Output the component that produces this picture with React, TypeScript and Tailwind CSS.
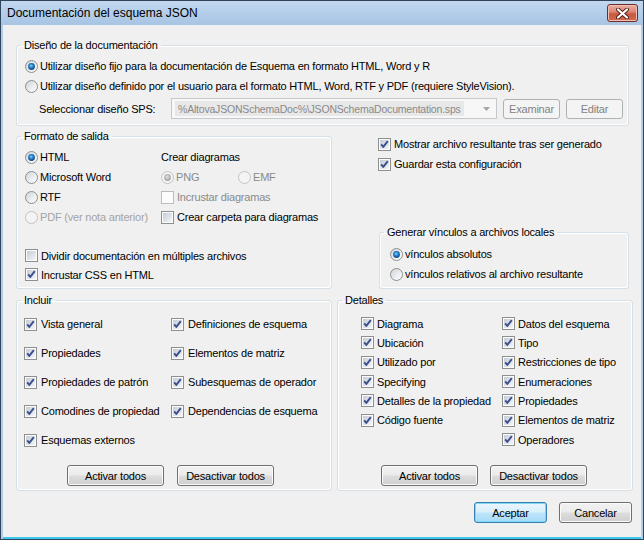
import React from "react";

const leftInclude = ["Vista general", "Propiedades", "Propiedades de patrón", "Comodines de propiedad", "Esquemas externos"];
const rightInclude = ["Definiciones de esquema", "Elementos de matriz", "Subesquemas de operador", "Dependencias de esquema"];

const leftDetails = ["Diagrama", "Ubicación", "Utilizado por", "Specifying", "Detalles de la propiedad", "Código fuente"];
const rightDetails = [
  "Datos del esquema",
  "Tipo",
  "Restricciones de tipo",
  "Enumeraciones",
  "Propiedades",
  "Elementos de matriz",
  "Operadores",
];

function Defs() {
  return (
    <svg width="0" height="0" className="absolute">
      <defs>
        <linearGradient id="cbFill" x1="0" y1="0" x2="1" y2="1">
          <stop offset="0" stopColor="#c6ccd6" />
          <stop offset="1" stopColor="#f3f5f8" />
        </linearGradient>
        <linearGradient id="rbFill" x1="0" y1="0" x2="1" y2="1">
          <stop offset="0" stopColor="#cdd1d6" />
          <stop offset="0.6" stopColor="#eef0f2" />
          <stop offset="1" stopColor="#fbfbfb" />
        </linearGradient>
        <radialGradient id="rbDot" cx="0.45" cy="0.4" r="0.6">
          <stop offset="0" stopColor="#7fd9ff" />
          <stop offset="0.45" stopColor="#2a86d0" />
          <stop offset="1" stopColor="#123d77" />
        </radialGradient>
        <radialGradient id="rbDotGray" cx="0.45" cy="0.4" r="0.6">
          <stop offset="0" stopColor="#e2e2e2" />
          <stop offset="1" stopColor="#9d9d9d" />
        </radialGradient>
      </defs>
    </svg>
  );
}

function Check({ checked = false, disabled = false }: { checked?: boolean; disabled?: boolean }) {
  return (
    <svg width="13" height="13" viewBox="0 0 13 13" className="shrink-0">
      <rect x="0.5" y="0.5" width="12" height="12" fill="#fcfcfc" stroke={disabled ? "#bcbcbc" : "#8e8f8f"} />
      {!disabled && <rect x="2" y="2" width="9" height="9" fill="url(#cbFill)" />}
      {checked && (
        <path d="M3.2 6.4 L5.3 8.9 L9.8 3.2" stroke="#3a4f8c" strokeWidth="1.9" fill="none" strokeLinejoin="round" />
      )}
    </svg>
  );
}

function Radio({ checked = false, disabled = false }: { checked?: boolean; disabled?: boolean }) {
  return (
    <svg width="13" height="13" viewBox="0 0 13 13" className="shrink-0">
      <circle cx="6.5" cy="6.5" r="6" fill={disabled ? "#f4f4f4" : "url(#rbFill)"} stroke={disabled ? "#c2c2c2" : "#8e8f8f"} />
      {checked && <circle cx="6.5" cy="6.5" r="3.4" fill={disabled ? "url(#rbDotGray)" : "url(#rbDot)"} />}
    </svg>
  );
}

function Group({ label, className = "", children }: { label: string; className?: string; children?: React.ReactNode }) {
  return (
    <fieldset
      className={`border border-[#d5dfe5] rounded-[3px] shadow-[inset_1px_1px_0_#ffffff,inset_-1px_-1px_0_#ffffff] ${className}`}
    >
      <legend className="ml-[4px] px-[3px] leading-[14px]">{label}</legend>
      {children}
    </fieldset>
  );
}

function Btn({
  children,
  variant = "normal",
  className = "",
}: {
  children: React.ReactNode;
  variant?: "normal" | "def" | "disabled";
  className?: string;
}) {
  const styles = {
    normal:
      "border-[#707070] text-black bg-[linear-gradient(to_bottom,#f2f2f2_0%,#ebebeb_48%,#dddddd_52%,#cfcfcf_100%)] shadow-[inset_0_0_0_1px_#fbfbfb]",
    def: "border-[#3c7fb1] text-black bg-[linear-gradient(to_bottom,#eaf6fd_0%,#d9f0fc_48%,#bee6fd_52%,#a7d9f5_100%)] shadow-[inset_0_0_0_1px_#7fd8f8]",
    disabled: "border-[#adb2b5] text-[#838383] bg-[#f4f4f4]",
  };
  return (
    <button
      type="button"
      className={`flex items-center justify-center rounded-[3px] border leading-[14px] ${styles[variant]} ${className}`}
    >
      {children}
    </button>
  );
}

export default function App() {
  return (
    <div className="w-[644px] h-[540px] flex flex-col border border-[#30445c] bg-[#b3cce8] font-['Liberation_Sans',_Arial,_sans-serif] text-[11px] leading-[14px] tracking-[-0.2px] text-black">
      <Defs />
      {/* title bar */}
      <div className="h-[24px] shrink-0 flex items-center justify-between pl-[6px] pr-[5px] bg-[linear-gradient(to_bottom,#c2d8ef,#a7c4e3)]">
        <span className="text-[12px] tracking-normal">Documentación del esquema JSON</span>
        <div className="w-[31px] h-[18px] rounded-[3px] border border-[#6e2c26] bg-[linear-gradient(to_bottom,#eab0a2_0%,#d9846f_45%,#c9583f_55%,#cf6b4f_100%)] shadow-[inset_0_0_0_1px_#f2c0b4] flex items-center justify-center">
          <svg width="13" height="11" viewBox="0 0 13 11">
            <path d="M2 1.5 L11 9.5 M11 1.5 L2 9.5" stroke="#4d1d18" strokeWidth="4" strokeLinecap="round" />
            <path d="M2 1.5 L11 9.5 M11 1.5 L2 9.5" stroke="#ffffff" strokeWidth="2.2" strokeLinecap="round" />
          </svg>
        </div>
      </div>

      {/* body */}
      <div className="flex-1 mx-[2px] bg-[#f0f0f0] border-b-2 border-[#3cc6ec] pl-[13px] pt-[13px] flex flex-col">
        <Group label="Diseño de la documentación" className="w-[613px] h-[88px]">
          <div className="pl-[8px] pt-[4px] flex flex-col">
            <div className="h-[20px] flex items-center">
              <Radio checked />
              <span className="ml-[2px]">Utilizar diseño fijo para la documentación de Esquema en formato HTML, Word y R</span>
            </div>
            <div className="h-[20px] flex items-center">
              <Radio />
              <span className="ml-[2px]">
                Utilizar diseño definido por el usuario para el formato HTML, Word, RTF y PDF (requiere StyleVision).
              </span>
            </div>
            <div className="h-[21px] mt-[2px] flex items-center">
              <span className="ml-[14px] w-[132px]">Seleccionar diseño SPS:</span>
              <div className="w-[326px] h-[21px] border border-[#c5c8cc] bg-[#f7f7f7] flex items-center pl-[3px] pr-[4px]">
                <span className="h-[15px] flex items-center bg-[#e8e8e8] px-[3px] text-[#8a8a8a] text-[10.5px]">
                  %AltovaJSONSchemaDoc%\JSONSchemaDocumentation.sps
                </span>
                <svg width="7" height="4" viewBox="0 0 7 4" className="ml-auto mr-[2px]">
                  <path d="M0 0 H7 L3.5 4 Z" fill="#a5a5a5" />
                </svg>
              </div>
              <Btn variant="disabled" className="ml-[6px] w-[57px] h-[20px]">
                Examinar
              </Btn>
              <Btn variant="disabled" className="ml-[6px] w-[57px] h-[20px]">
                Editar
              </Btn>
            </div>
          </div>
        </Group>

        <div className="flex mt-[3px]">
          <Group label="Formato de salida" className="w-[316px] h-[160px]">
            <div className="flex pl-[8px] pt-[4px]">
              <div className="w-[136px] flex flex-col">
                <div className="h-[20px] flex items-center">
                  <Radio checked />
                  <span className="ml-[2px]">HTML</span>
                </div>
                <div className="h-[20px] flex items-center">
                  <Radio />
                  <span className="ml-[2px]">Microsoft Word</span>
                </div>
                <div className="h-[20px] flex items-center">
                  <Radio />
                  <span className="ml-[2px]">RTF</span>
                </div>
                <div className="h-[20px] flex items-center">
                  <Radio disabled />
                  <span className="ml-[2px] text-[#a3a3a3]">PDF (ver nota anterior)</span>
                </div>
              </div>
              <div className="flex flex-col">
                <div className="h-[20px] flex items-center">Crear diagramas</div>
                <div className="h-[20px] flex items-center">
                  <div className="w-[77px] flex items-center">
                    <Radio checked disabled />
                    <span className="ml-[2px] text-[#8a8a8a]">PNG</span>
                  </div>
                  <Radio disabled />
                  <span className="ml-[2px] text-[#8a8a8a]">EMF</span>
                </div>
                <div className="h-[20px] flex items-center">
                  <Check disabled />
                  <span className="ml-[3px] text-[#8a8a8a]">Incrustar diagramas</span>
                </div>
                <div className="h-[20px] flex items-center">
                  <Check />
                  <span className="ml-[3px]">Crear carpeta para diagramas</span>
                </div>
              </div>
            </div>
            <div className="pl-[8px] mt-[19px] flex flex-col">
              <div className="h-[19px] flex items-center">
                <Check />
                <span className="ml-[3px]">Dividir documentación en múltiples archivos</span>
              </div>
              <div className="h-[19px] flex items-center">
                <Check checked />
                <span className="ml-[3px]">Incrustar CSS en HTML</span>
              </div>
            </div>
          </Group>

          <div className="flex-1 flex flex-col">
            <div className="pl-[46px] pt-[5px] flex flex-col">
              <div className="h-[20px] flex items-center">
                <Check checked />
                <span className="ml-[3px]">Mostrar archivo resultante tras ser generado</span>
              </div>
              <div className="h-[20px] flex items-center">
                <Check checked />
                <span className="ml-[3px]">Guardar esta configuración</span>
              </div>
            </div>
            <Group label="Generar vínculos a archivos locales" className="ml-[47px] mt-[51px] w-[250px] h-[64px]">
              <div className="pl-[10px] pt-[5px] flex flex-col">
                <div className="h-[20px] flex items-center">
                  <Radio checked />
                  <span className="ml-[2px]">vínculos absolutos</span>
                </div>
                <div className="h-[20px] flex items-center">
                  <Radio />
                  <span className="ml-[2px]">vínculos relativos al archivo resultante</span>
                </div>
              </div>
            </Group>
          </div>
        </div>

        <div className="flex mt-[4px]">
          <Group label="Incluir" className="w-[316px] h-[198px]">
            <div className="flex pl-[7px] pt-[7px]">
              <div className="w-[147px] flex flex-col gap-[9px]">
                {leftInclude.map((t) => (
                  <div key={t} className="h-[20px] flex items-center">
                    <Check checked />
                    <span className="ml-[4px]">{t}</span>
                  </div>
                ))}
              </div>
              <div className="flex flex-col gap-[9px]">
                {rightInclude.map((t) => (
                  <div key={t} className="h-[20px] flex items-center">
                    <Check checked />
                    <span className="ml-[4px]">{t}</span>
                  </div>
                ))}
              </div>
            </div>
            <div className="flex pl-[50px] mt-[15px] gap-[13px]">
              <Btn className="w-[97px] h-[21px]">Activar todos</Btn>
              <Btn className="w-[97px] h-[21px]">Desactivar todos</Btn>
            </div>
          </Group>

          <Group label="Detalles" className="ml-[5px] w-[296px] h-[198px]">
            <div className="flex pl-[23px] pt-[7px]">
              <div className="w-[141px] flex flex-col">
                {leftDetails.map((t) => (
                  <div key={t} className="h-[19.33px] flex items-center">
                    <Check checked />
                    <span className="ml-[3px]">{t}</span>
                  </div>
                ))}
              </div>
              <div className="flex flex-col">
                {rightDetails.map((t) => (
                  <div key={t} className="h-[19.33px] flex items-center">
                    <Check checked />
                    <span className="ml-[3px]">{t}</span>
                  </div>
                ))}
              </div>
            </div>
            <div className="flex pl-[43px] mt-[16px] gap-[12px]">
              <Btn className="w-[97px] h-[21px]">Activar todos</Btn>
              <Btn className="w-[97px] h-[21px]">Desactivar todos</Btn>
            </div>
          </Group>
        </div>

        <div className="flex justify-end gap-[12px] mt-[11px] pr-[9px]">
          <Btn variant="def" className="w-[73px] h-[21px]">
            Aceptar
          </Btn>
          <Btn className="w-[73px] h-[21px]">Cancelar</Btn>
        </div>
      </div>
    </div>
  );
}
